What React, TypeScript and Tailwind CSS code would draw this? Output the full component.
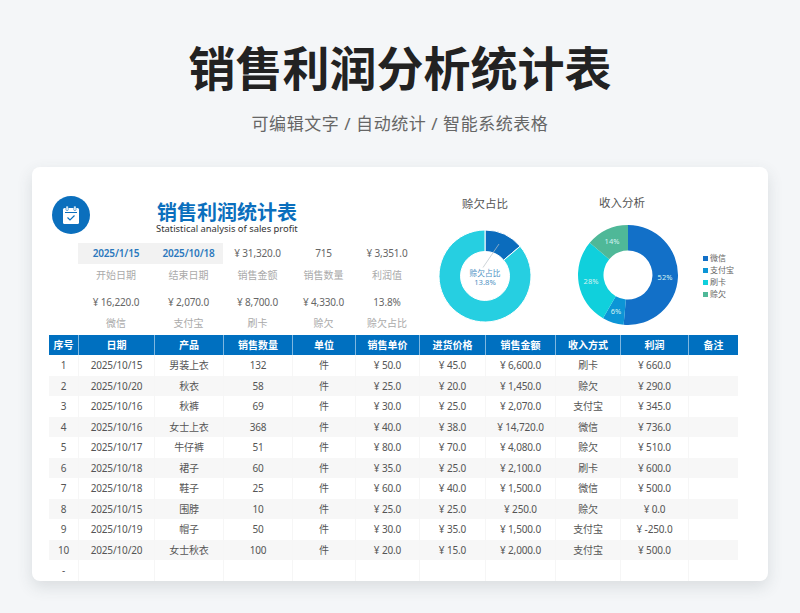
const font = { fontFamily: '"Noto Sans", "Noto Sans CJK SC", sans-serif' };

const Y = "¥ ";
const headers = ["序号", "日期", "产品", "销售数量", "单位", "销售单价", "进货价格", "销售金额", "收入方式", "利润", "备注"];
const rows = [
  ["1", "2025/10/15", "男装上衣", "132", "件", "50.0", "45.0", "6,600.0", "刷卡", "660.0", ""],
  ["2", "2025/10/20", "秋衣", "58", "件", "25.0", "20.0", "1,450.0", "赊欠", "290.0", ""],
  ["3", "2025/10/16", "秋裤", "69", "件", "30.0", "25.0", "2,070.0", "支付宝", "345.0", ""],
  ["4", "2025/10/16", "女士上衣", "368", "件", "40.0", "38.0", "14,720.0", "微信", "736.0", ""],
  ["5", "2025/10/17", "牛仔裤", "51", "件", "80.0", "70.0", "4,080.0", "赊欠", "510.0", ""],
  ["6", "2025/10/18", "裙子", "60", "件", "35.0", "25.0", "2,100.0", "刷卡", "600.0", ""],
  ["7", "2025/10/18", "鞋子", "25", "件", "60.0", "40.0", "1,500.0", "微信", "500.0", ""],
  ["8", "2025/10/15", "围脖", "10", "件", "25.0", "25.0", "250.0", "赊欠", "0.0", ""],
  ["9", "2025/10/19", "帽子", "50", "件", "30.0", "35.0", "1,500.0", "支付宝", "-250.0", ""],
  ["10", "2025/10/20", "女士秋衣", "100", "件", "20.0", "15.0", "2,000.0", "支付宝", "500.0", ""],
  ["-", "", "", "", "", "", "", "", "", "", ""],
];
const money = [5, 6, 7, 9];
const stats = [
  [["2025/1/15", "开始日期", true], ["2025/10/18", "结束日期", true], [Y + "31,320.0", "销售金额"], ["715", "销售数量"], [Y + "3,351.0", "利润值"]],
  [[Y + "16,220.0", "微信"], [Y + "2,070.0", "支付宝"], [Y + "8,700.0", "刷卡"], [Y + "4,330.0", "赊欠"], ["13.8%", "赊欠占比"]],
] as [string, string, boolean?][][];

function arc(cx: number, cy: number, r: number, ir: number, a0: number, a1: number) {
  const p = (rad: number, a: number) => {
    const t = ((a - 90) * Math.PI) / 180;
    return `${(cx + rad * Math.cos(t)).toFixed(2)} ${(cy + rad * Math.sin(t)).toFixed(2)}`;
  };
  const large = a1 - a0 > 180 ? 1 : 0;
  return `M${p(r, a0)}A${r} ${r} 0 ${large} 1 ${p(r, a1)}L${p(ir, a1)}A${ir} ${ir} 0 ${large} 0 ${p(ir, a0)}Z`;
}

function LeftDonut() {
  return (
    <svg width="96" height="96" viewBox="0 0 96 96" className="block">
      <path d={arc(48, 48, 46, 24.5, 0, 49.7)} fill="#0b6cbd" stroke="#fff" strokeWidth="1" />
      <path d={arc(48, 48, 46, 24.5, 49.7, 360)} fill="#26cfe1" stroke="#fff" strokeWidth="1" />
      <line x1="62" y1="16" x2="46" y2="39.5" stroke="#b9c3c9" strokeWidth="0.7" />
      <text x="48" y="48" textAnchor="middle" fontSize="7.7" fill="#4f93c4">赊欠占比</text>
      <text x="48" y="57" textAnchor="middle" fontSize="7.7" fill="#4f93c4">13.8%</text>
    </svg>
  );
}

function RightDonut() {
  const segs = [
    { a: 0, b: 185, c: "#1270c8" },
    { a: 185, b: 210, c: "#0c95d6" },
    { a: 210, b: 310, c: "#10d0dc" },
    { a: 310, b: 360, c: "#4fb898" },
  ];
  return (
    <svg width="102" height="102" viewBox="0 0 102 102" className="block">
      {segs.map((s) => (
        <path key={s.c} d={arc(51, 51, 50, 24.5, s.a, s.b)} fill={s.c} />
      ))}
      <g fontSize="7.5" fill="#d3f3f2" textAnchor="middle">
        <text x="88" y="56">52%</text>
        <text x="39" y="90">6%</text>
        <text x="14" y="60">28%</text>
        <text x="35" y="20">14%</text>
      </g>
    </svg>
  );
}

export default function App() {
  return (
    <div style={font} className="w-[800px] h-[613px] overflow-hidden bg-[#f4f6f8] flex flex-col items-center">
      <h1 className="mt-[38px] h-[60px] leading-[60px] text-[47px] font-bold text-[#222222]">销售利润分析统计表</h1>
      <p className="mt-[11px] h-[30px] leading-[30px] text-[17px] text-[#666666] tracking-[0.55px]">可编辑文字 / 自动统计 / 智能系统表格</p>
      <div className="mt-[28px] w-[736px] h-[414px] bg-white rounded-[8px] shadow-[0_6px_16px_rgba(60,70,80,0.14)] overflow-hidden pl-[17px] pr-[30px]">
        <div className="h-[168px] flex">
          <div className="w-[370px] shrink-0 flex flex-col">
            <div className="h-[77px] flex items-start">
              <div className="mt-[29px] ml-[3px] w-[38px] h-[38px] rounded-full bg-[#0b6fbd] flex items-center justify-center shrink-0">
                <svg width="20" height="20" viewBox="0 0 20 20">
                  <rect x="2" y="3" width="16" height="16" rx="1.5" fill="#fff" />
                  <rect x="5" y="1" width="2.2" height="4.5" rx="0.8" fill="#fff" stroke="#0b6fbd" strokeWidth="0.6" />
                  <rect x="12.8" y="1" width="2.2" height="4.5" rx="0.8" fill="#fff" stroke="#0b6fbd" strokeWidth="0.6" />
                  <line x1="4" y1="7.5" x2="16" y2="7.5" stroke="#0b6fbd" strokeWidth="1" />
                  <path d="M6.5 12.5 L9 15 L13.5 10.5" fill="none" stroke="#0b6fbd" strokeWidth="1.2" />
                </svg>
              </div>
              <div className="ml-[66px] mt-[35px] w-[146px] flex flex-col items-start">
                <div className="h-[22px] leading-[22px] text-[20px] font-bold text-[#0b6fbd] pl-[1px]">销售利润统计表</div>
                <div className="h-[10px] leading-[10px] text-[9.4px] text-[#333333] whitespace-nowrap">Statistical analysis of sales profit</div>
              </div>
            </div>
            {stats.map((row, i) => (
              <div key={i} className={`grid grid-cols-[76px_69px_69px_63px_64px] ml-[29px] ${i === 0 ? "mt-[1px] h-[46px]" : "h-[44px] mt-[5px]"}`}>
                {row.map(([v, l, hi]) => (
                  <div key={l} className="flex flex-col items-center">
                    <div className={`w-full h-[21px] flex items-center justify-center text-[10px] tracking-[-0.15px] ${hi ? "bg-[#f2f2f2] text-[#2a78bd] font-semibold" : "text-[#666666]"}`}>
                      {v}
                    </div>
                    <div className={`flex items-center text-[10px] text-[#aaaaaa] ${i === 0 ? "h-[21px] mt-[1px]" : "h-[21px]"}`}>{l}</div>
                  </div>
                ))}
              </div>
            ))}
          </div>
          <div className="flex-1 flex">
            <div className="ml-[18px] w-[96px] flex flex-col items-center">
              <div className="mt-[28px] h-[18px] leading-[18px] text-[11.5px] text-[#555555]">赊欠占比</div>
              <div className="mt-[15px]"><LeftDonut /></div>
            </div>
            <div className="ml-[44px] w-[102px] flex flex-col items-center">
              <div className="mt-[27px] h-[18px] leading-[18px] text-[11.5px] text-[#555555] mr-[12px]">收入分析</div>
              <div className="mt-[12px]"><RightDonut /></div>
            </div>
            <div className="ml-[24px] mt-[85px] flex flex-col">
              {[["微信", "#1270c8"], ["支付宝", "#0c95d6"], ["刷卡", "#10d0dc"], ["赊欠", "#4fb898"]].map(([t, c]) => (
                <div key={t} className="h-[12px] flex items-center gap-[2px] text-[8px] text-[#666666]">
                  <span className="w-[5px] h-[5px]" style={{ backgroundColor: c }} />
                  {t}
                </div>
              ))}
            </div>
          </div>
        </div>
        <div className="grid grid-cols-[29px_76px_69px_69px_63px_64px_66px_70px_65px_68px_50px] h-[20px] bg-[#0070c0]">
          {headers.map((h, i) => (
            <div key={h} className={`flex items-center justify-center text-[10px] font-bold text-white ${i ? "border-l border-[#7fb7e0]" : ""}`}>{h}</div>
          ))}
        </div>
        {rows.map((r, i) => (
          <div key={i} className={`grid grid-cols-[29px_76px_69px_69px_63px_64px_66px_70px_65px_68px_50px] h-[20.5px] ${i % 2 ? "bg-[#f7f7f7]" : "bg-white"}`}>
            {r.map((c, j) => (
              <div key={j} className={`flex items-center justify-center pt-[1px] text-[10px] tracking-[-0.15px] text-[#555555] ${j ? "border-l border-[#f6f6f6]" : ""}`}>{money.includes(j) && c ? Y + c : c}</div>
            ))}
          </div>
        ))}
      </div>
    </div>
  );
}
